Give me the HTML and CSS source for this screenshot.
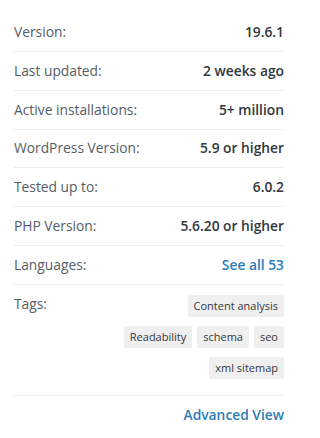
FILE: index.html
```html
<!DOCTYPE html>
<html>
<head>
<meta charset="utf-8">
<link rel="stylesheet" href="styles.css">
</head>
<body>
<ul class="meta">
  <li class="row"><span class="label">Version:</span><strong class="value">19.6.1</strong></li>
  <li class="row"><span class="label">Last updated:</span><strong class="value">2 weeks ago</strong></li>
  <li class="row"><span class="label">Active installations:</span><strong class="value">5+ million</strong></li>
  <li class="row"><span class="label">WordPress Version:</span><strong class="value">5.9 or higher</strong></li>
  <li class="row"><span class="label">Tested up to:</span><strong class="value">6.0.2</strong></li>
  <li class="row"><span class="label">PHP Version:</span><strong class="value">5.6.20 or higher</strong></li>
  <li class="row"><span class="label">Languages:</span><a class="value link" href="#">See all 53</a></li>
  <li class="row tags-row">
    <span class="label tags-label">Tags:</span>
    <div class="tags">
      <a class="tag" href="#">Content analysis</a>
      <a class="tag" href="#">Readability</a>
      <a class="tag" href="#">schema</a>
      <a class="tag" href="#">seo</a>
      <a class="tag" href="#">xml sitemap</a>
    </div>
  </li>
  <li class="row adv"><a class="value link" href="#">Advanced View</a></li>
</ul>
</body>
</html>
```
FILE: styles.css
```css
html, body {
  margin: 0;
  padding: 0;
  background: #ffffff;
}
body {
  width: 300px;
  overflow: hidden;
  font-family: "Open Sans", "Noto Sans", "Liberation Sans", sans-serif;
  font-size: 13.8px;
  color: #555d66;
}
.meta {
  list-style: none;
  margin: 0;
  padding: 13.2px 16px 0 14px;
}
.row {
  display: flex;
  justify-content: space-between;
  align-items: center;
  padding: 11.9px 0;
  line-height: 14px;
  border-bottom: 1px solid #eeeeee;
}
.label {
  color: #555d66;
}
.value {
  font-weight: 600;
  color: #32373c;
  text-decoration: none;
}
.link {
  color: #2c7db5;
}
.tags-row {
  align-items: flex-start;
  padding: 10px 0 16px;
}
.tags-label {
  line-height: 18px;
}
.tags {
  display: flex;
  flex-wrap: wrap;
  justify-content: flex-end;
  gap: 9px 5px;
  width: 166px;
}
.tag {
  display: block;
  height: 22px;
  line-height: 22px;
  padding: 0 6px;
  font-size: 11px;
  background: #efefef;
  color: #32373c;
  text-decoration: none;
  border-radius: 2px;
}
.adv {
  justify-content: flex-end;
  border-bottom: none;
  padding-top: 12px;
}
```
